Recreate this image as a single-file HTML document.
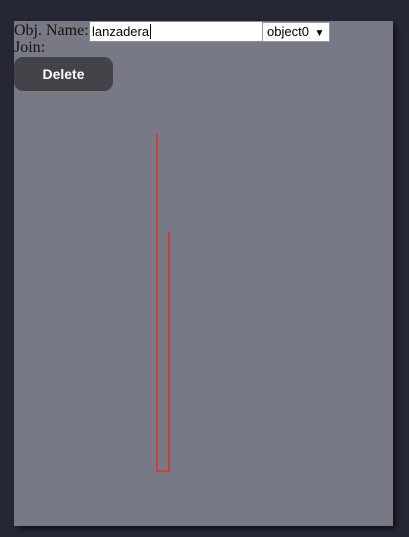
<!DOCTYPE html>
<html><head><style>
html,body{margin:0;padding:0;width:409px;height:537px;background:#262835;overflow:hidden}
#p{position:absolute;left:14px;top:21px;width:379px;height:505px;background:#777a84;box-shadow:3px 3px 6px rgba(0,0,0,.6);font-family:"Liberation Serif",serif;font-size:16px;color:#111}
.t{position:absolute;white-space:nowrap}
#in{position:absolute;left:75px;top:0;width:170px;height:19px;background:#fff;border:1px solid #6b8fd6;font-family:"Liberation Sans",sans-serif;font-size:13px;line-height:19px;padding-left:2px;box-sizing:content-box;color:#000}
#sel{position:absolute;left:248px;top:1px;width:62px;height:18px;background:#fff;border:1px solid #999;font-family:"Liberation Sans",sans-serif;font-size:13px;line-height:18px;padding-left:4px;color:#000}
#btn{position:absolute;left:0;top:36px;width:99px;height:34px;background:#434349;border-radius:9px;color:#fff;font-family:"Liberation Sans",sans-serif;font-size:14px;font-weight:bold;text-align:center;line-height:34px}
</style></head><body>
<div id="p">
<div class="t" style="left:0;top:1px;line-height:18px">Obj. Name:</div>
<div id="in">lanzadera<span style="border-left:1px solid #000;margin-left:1px"></span></div>
<div id="sel">object0 <span style="font-size:10px;margin-left:2px">▼</span></div>
<div class="t" style="left:0;top:18px;line-height:18px">Join:</div>
<div id="btn">Delete</div>
<svg style="position:absolute;left:0;top:0" width="379" height="505">
<polyline points="143,113 143,450 155,450 155,211" fill="none" stroke="#c8403f" stroke-width="2"/>
</svg>
</div>
</body></html>
